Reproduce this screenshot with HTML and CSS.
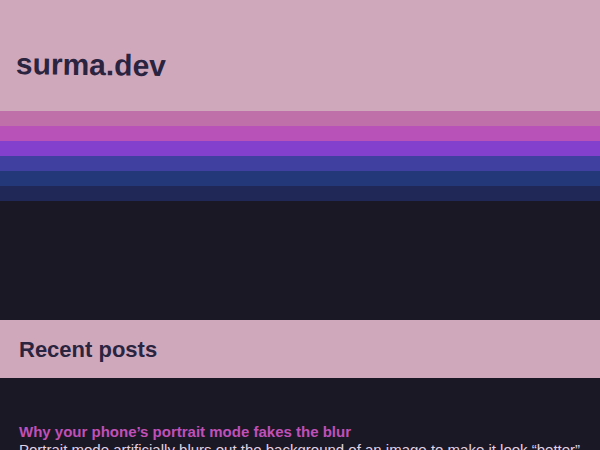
FILE: index.html
```html
<!DOCTYPE html>
<html>
<head>
<meta charset="utf-8">
<link rel="stylesheet" href="styles.css">
</head>
<body>
<header class="hero">
  <h1 class="logo">surma.dev</h1>
</header>
<div class="stripes">
  <div class="stripe s1"></div>
  <div class="stripe s2"></div>
  <div class="stripe s3"></div>
  <div class="stripe s4"></div>
  <div class="stripe s5"></div>
  <div class="stripe s6"></div>
</div>
<div class="spacer"></div>
<section class="band">
  <h2 class="band-title">Recent posts</h2>
</section>
<main class="posts">
  <article class="post">
    <a class="post-title" href="#">Why your phone’s portrait mode fakes the blur</a>
    <p class="post-desc">Portrait mode artificially blurs out the background of an image to make it look “better”. How does it work and why does it look different from a real camera?</p>
  </article>
</main>
</body>
</html>
```
FILE: styles.css
```css
html, body {
  margin: 0;
  padding: 0;
}
body {
  background: #1b1826;
  font-family: "Liberation Sans", Arial, sans-serif;
  overflow: hidden;
  height: 450px;
}
.hero {
  background: #d0a8bc;
  height: 111px;
  display: flex;
  align-items: center;
  padding-left: 16px;
  box-sizing: border-box;
}
.logo {
  margin: 0;
  font-size: 30px;
  font-weight: 700;
  color: #2a2440;
  transform: rotate(0.8deg);
  transform-origin: left center;
  padding-top: 16px;
}
.stripes {
  display: flex;
  flex-direction: column;
}
.stripe { height: 15px; }
.s1 { background: #c070a8; }
.s2 { background: #b852b8; }
.s3 { background: #8240cc; }
.s4 { background: #3f40a0; }
.s5 { background: #233878; }
.s6 { background: #202858; }
.spacer { height: 119px; }
.band {
  background: #d0a8bc;
  height: 58px;
  display: flex;
  align-items: center;
  padding-left: 19px;
}
.band-title {
  margin: 0;
  padding-top: 1px;
  font-size: 22px;
  font-weight: 700;
  color: #2a2440;
}
.posts {
  padding: 45px 0 0 19px;
}
.post-title {
  display: block;
  font-size: 15px;
  font-weight: 700;
  color: #c050b8;
  text-decoration: none;
  line-height: 18px;
}
.post-desc {
  margin: 0;
  font-size: 15px;
  line-height: 18px;
  color: #e2d2e2;
}
```
